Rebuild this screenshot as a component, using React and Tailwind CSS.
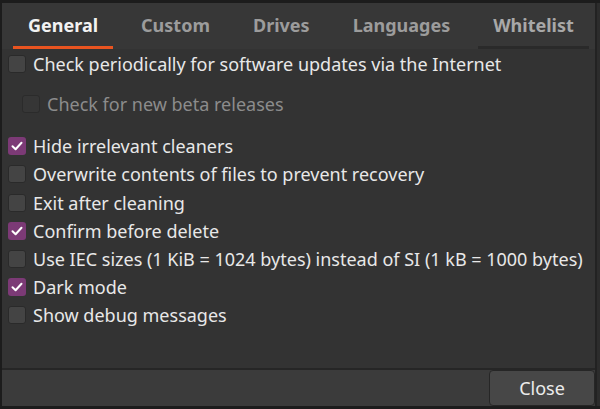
import React from 'react';

const tabs = ['General', 'Custom', 'Drives', 'Languages', 'Whitelist'];

const options = [
  { label: 'Check periodically for software updates via the Internet', checked: false },
  { label: 'Check for new beta releases', checked: false, indent: true, disabled: true },
  { label: 'Hide irrelevant cleaners', checked: true },
  { label: 'Overwrite contents of files to prevent recovery', checked: false },
  { label: 'Exit after cleaning', checked: false },
  { label: 'Confirm before delete', checked: true },
  { label: 'Use IEC sizes (1 KiB = 1024 bytes) instead of SI (1 kB = 1000 bytes)', checked: false },
  { label: 'Dark mode', checked: true },
  { label: 'Show debug messages', checked: false },
];

const Checkbox = ({ checked, disabled }) =>
  checked ? (
    <span className="flex h-[18px] w-[18px] shrink-0 items-center justify-center rounded-[3px] bg-[#7c3a76]">
      <svg width="14" height="14" viewBox="0 0 14 14" fill="none">
        <path d="M2.5 7.2 L5.6 10.2 L11.5 3.8" stroke="#fff" strokeWidth="2" strokeLinecap="round" strokeLinejoin="round" />
      </svg>
    </span>
  ) : (
    <span
      className={`h-[18px] w-[18px] shrink-0 rounded-[3px] border ${
        disabled ? 'border-[#2b2b2b] bg-[#363636]' : 'border-[#2a2a2a] bg-[#444444]'
      }`}
    />
  );

const App = () => {
  return (
    <div
      className="flex h-[409px] w-[600px] flex-col border-t-[3px] border-l-2 border-[#1c1c1c] bg-[#2c2c2c] text-[#e6e6e6]"
      style={{ fontFamily: '"Noto Sans", "DejaVu Sans", sans-serif' }}
    >
      <div className="mr-[3px] flex flex-1 flex-col border-r-2 border-[#222]">
        <div className="flex h-[46px] gap-[13px] bg-[#373737] pl-[11px]">
          {tabs.map((t, i) => (
            <div
              key={t}
              className={`flex items-center border-b-[3px] px-[15px] pt-[2px] text-[18px] font-bold ${
                i === 0
                  ? 'border-[#e95420] text-[#f2f2f2]'
                  : i === 4
                  ? 'border-[#2a2a2a] text-[#a8a8a8]'
                  : 'border-transparent text-[#9c9c9c]'
              }`}
            >
              {t}
            </div>
          ))}
        </div>

        <div className="flex flex-1 flex-col bg-[#333333] pt-[1px]">
          {options.map((o, i) => (
            <div
              key={o.label}
              className={`flex items-center gap-[7px] text-[18px] ${
                o.indent ? 'h-[52px] pl-[20px]' : 'h-[28.2px] pl-[6px]'
              } ${o.disabled ? 'text-[#8c8c8c]' : 'text-[#e8e8e8]'} ${i === 2 ? 'mt-[2px]' : ''}`}
            >
              <Checkbox checked={o.checked} disabled={o.disabled} />
              <span className="whitespace-nowrap leading-none">{o.label}</span>
            </div>
          ))}
        </div>

        <div className="flex h-[38px] justify-end border-t-2 border-[#262626] bg-[#3b3b3b]">
          <button className="flex w-[106px] items-center justify-center rounded-[4px] border border-[#262626] bg-[#474747] text-[18px] text-[#ececec]">
            Close
          </button>
        </div>
      </div>
      <div className="h-[3px] bg-[#1c1c1c]" />
    </div>
  );
};

export default App;
